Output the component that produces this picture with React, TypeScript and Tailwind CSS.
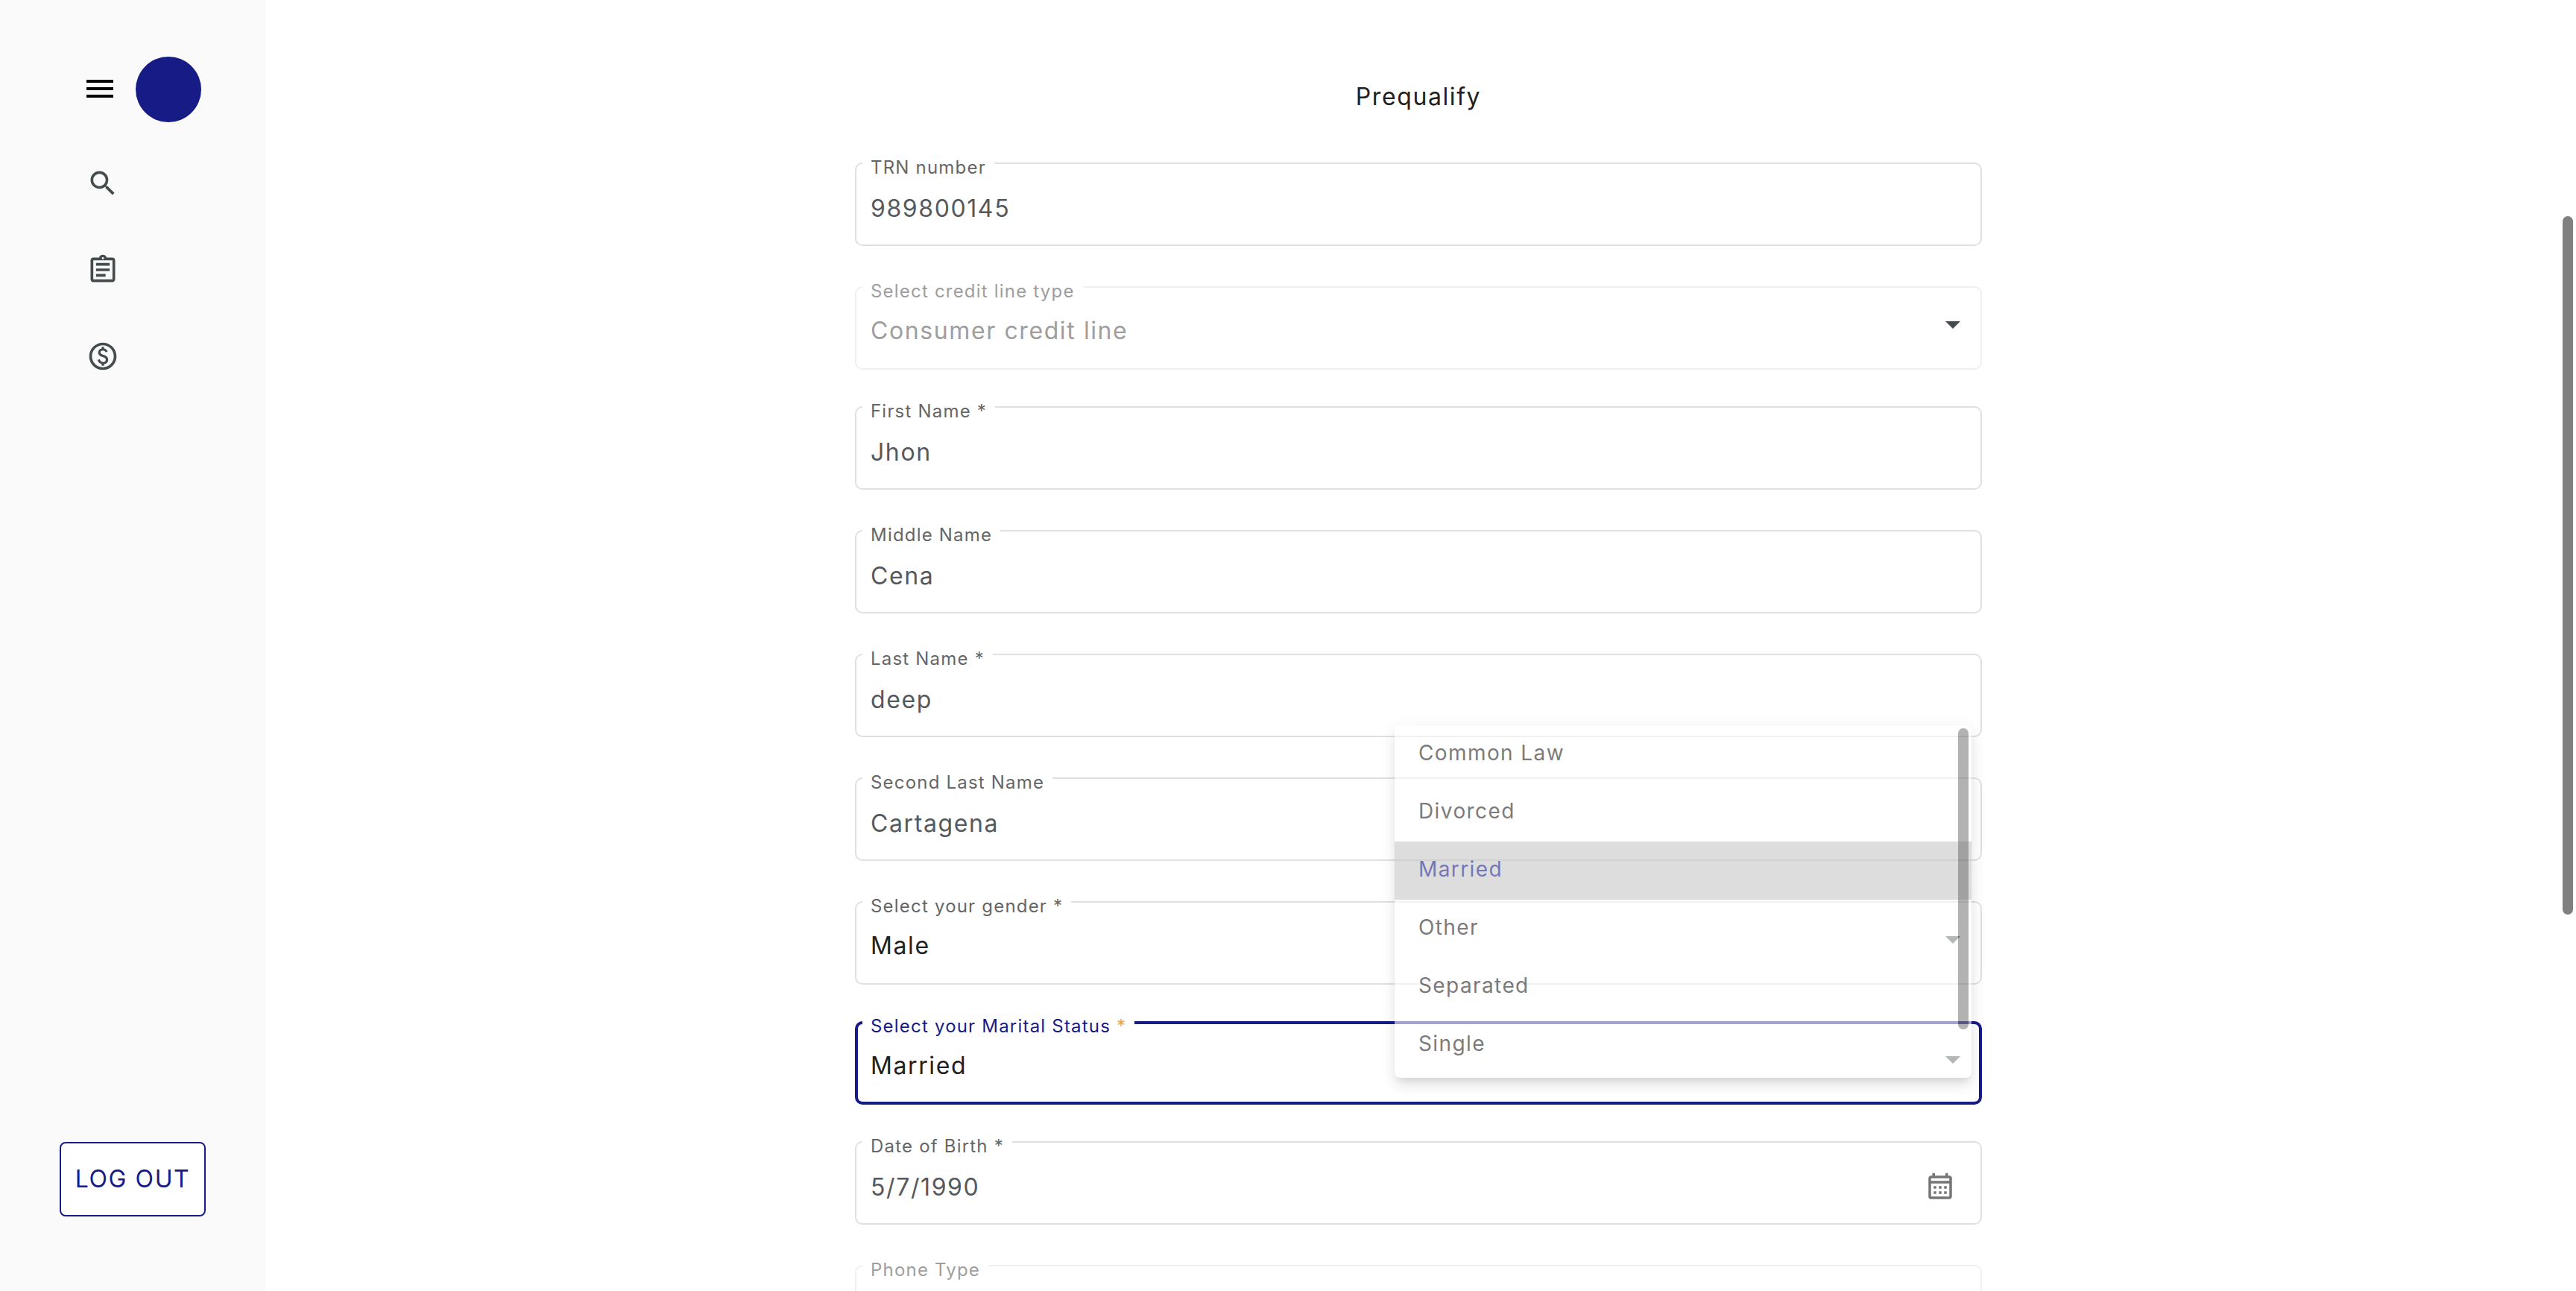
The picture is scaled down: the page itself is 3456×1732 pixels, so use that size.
import { useState, type ReactNode } from "react";
import { MdMenu, MdOutlineAssignment, MdOutlinePaid, MdSearch } from "react-icons/md";

type Tone = "normal" | "disabled" | "focused";

const edgeTone: Record<Tone, string> = {
  normal: "border-[#e0e0e0]",
  disabled: "border-[#f0f0f0]",
  focused: "border-[#171b86]",
};

const leadEdge: Record<Tone, string> = {
  normal: "border-y-2 border-l-2",
  disabled: "border-y-2 border-l-2",
  focused: "border-y-4 border-l-4",
};

const notchEdge: Record<Tone, string> = {
  normal: "border-b-2",
  disabled: "border-b-2",
  focused: "border-b-4",
};

const trailEdge: Record<Tone, string> = {
  normal: "border-y-2 border-r-2",
  disabled: "border-y-2 border-r-2",
  focused: "border-y-4 border-r-4",
};

const labelTone: Record<Tone, string> = {
  normal: "text-[#666666]",
  disabled: "text-[#9e9e9e]",
  focused: "text-[#171b86]",
};

type FrameProps = {
  id: string;
  label: string;
  required?: boolean;
  tone?: Tone;
  children: ReactNode;
};

/* Outlined form field: the outline and the control share one grid cell. */
function Frame({ id, label, required, tone = "normal", children }: FrameProps) {
  return (
    <div className="relative grid h-28 grid-cols-1 grid-rows-1">
      <div className="col-start-1 row-start-1 flex">
        <div className={`w-2.5 rounded-l-[10px] ${leadEdge[tone]} ${edgeTone[tone]}`} />
        <div className={`px-[11px] ${notchEdge[tone]} ${edgeTone[tone]}`}>
          <label
            htmlFor={id}
            className={`block text-2xl leading-[13px] tracking-wider whitespace-nowrap ${labelTone[tone]}`}
          >
            {label}
            {required && (
              <span className={tone === "focused" ? "text-[#f0a732]" : ""}> *</span>
            )}
          </label>
        </div>
        <div className={`flex-1 rounded-r-[10px] ${trailEdge[tone]} ${edgeTone[tone]}`} />
      </div>
      {children}
    </div>
  );
}

type FieldProps = {
  id: string;
  label: string;
  value: string;
  required?: boolean;
};

function TextField({ id, label, value, required, children }: FieldProps & { children?: ReactNode }) {
  const [text, setText] = useState(value);
  return (
    <Frame id={id} label={label} required={required}>
      <input
        id={id}
        type="text"
        value={text}
        onChange={(e) => setText(e.target.value)}
        className="col-start-1 row-start-1 w-full bg-transparent px-[21px] pt-3 text-[32px] tracking-wider text-[#54595d] outline-none"
      />
      {children}
    </Frame>
  );
}

type SelectFieldProps = FieldProps & {
  options: string[];
  tone?: Tone;
  children?: ReactNode;
};

function SelectField({ id, label, value, required, options, tone = "normal", children }: SelectFieldProps) {
  const [picked, setPicked] = useState(value);
  return (
    <Frame id={id} label={label} required={required} tone={tone}>
      <select
        id={id}
        value={picked}
        disabled={tone === "disabled"}
        onChange={(e) => setPicked(e.target.value)}
        className="col-start-1 row-start-1 w-full appearance-none bg-transparent px-[21px] pt-2 text-[32px] tracking-wider text-[#212121] opacity-100 outline-none disabled:text-[#9e9e9e]"
      >
        {options.map((o) => (
          <option key={o}>{o}</option>
        ))}
      </select>
      <svg
        viewBox="0 0 20 10"
        className="pointer-events-none col-start-1 row-start-1 mt-[47px] mr-[29px] h-2.5 w-5 self-start justify-self-end fill-[#454c4d]"
        aria-hidden="true"
      >
        <path d="M0 0h20L10 10z" />
      </svg>
      {children}
    </Frame>
  );
}

const statuses = ["Common Law", "Divorced", "Married", "Other", "Separated", "Single"];

function StatusMenu() {
  return (
    <div className="absolute right-3.5 bottom-9 z-10 h-[473px] w-[774px] rounded-lg bg-white opacity-60 shadow-[0_8px_10px_-6px_rgba(0,0,0,0.2),0_12px_16px_0_rgba(0,0,0,0.1),0_4px_20px_2px_rgba(0,0,0,0.08)]">
      <ul role="listbox" aria-label="Marital status options">
        {statuses.map((s) => (
          <li
            key={s}
            role="option"
            aria-selected={s === "Married"}
            className="flex h-[78px] items-center px-8 pb-1 text-[28px] tracking-wider text-[#252525] aria-selected:bg-[#c8c8c8] aria-selected:text-[#171b86]"
          >
            {s}
          </li>
        ))}
      </ul>
      <div className="absolute top-1 right-1 h-[404px] w-3.5 rounded-full bg-black/50" />
    </div>
  );
}

function CalendarIcon() {
  return (
    <svg viewBox="0 0 24 24" className="size-[42px] fill-[#757575]" aria-hidden="true">
      <path d="M7 11h2v2H7v-2m14-6v14c0 1.11-.89 2-2 2H5a2 2 0 0 1-2-2V5c0-1.1.9-2 2-2h1V1h2v2h8V1h2v2h1a2 2 0 0 1 2 2M5 7h14V5H5v2m14 12V9H5v10h14m-4-6v-2h2v2h-2m-4 0v-2h2v2h-2m-4 2h2v2H7v-2m8 2v-2h2v2h-2m-4 0v-2h2v2h-2Z" />
    </svg>
  );
}

function Sidebar() {
  return (
    <aside className="flex w-[356px] shrink-0 flex-col justify-between bg-[#fafafa] pt-[76px] pb-[100px]">
      <div>
        <div className="flex items-center gap-6 pl-[110px]">
          <button type="button" aria-label="Menu" className="pb-0.5 text-black">
            <MdMenu className="size-12" />
          </button>
          <div className="size-[88px] rounded-full bg-[#171b86]" />
        </div>
        <nav className="mt-[60px] flex flex-col items-start gap-[72px] pl-[116px] text-[#454c4d]">
          <a href="#search" aria-label="Search">
            <MdSearch className="size-11" />
          </a>
          <a href="#applications" aria-label="Applications">
            <MdOutlineAssignment className="size-11" />
          </a>
          <a href="#payments" aria-label="Payments">
            <MdOutlinePaid className="size-11" />
          </a>
        </nav>
      </div>
      <button
        type="button"
        className="h-[100px] self-center rounded-lg border-2 border-[#171b86] bg-white px-[19px] text-[32px] tracking-wider text-[#171b86]"
      >
        LOG OUT
      </button>
    </aside>
  );
}

export default function App() {
  return (
    <div className="flex h-screen overflow-hidden bg-white font-['Inter',sans-serif]">
      <Sidebar />
      <main className="min-w-0 flex-1 overflow-hidden pt-[110px] pr-1.5">
        <form className="mx-auto flex w-full max-w-[1512px] flex-col">
          <h1 className="text-center text-[32px] leading-10 tracking-wider text-[#212121]">Prequalify</h1>
          <div className="mt-[68px] flex flex-col gap-[54px]">
            <TextField id="trn" label="TRN number" value="989800145" />
            <div className="flex flex-col gap-[49px]">
              <SelectField
                id="credit"
                label="Select credit line type"
                value="Consumer credit line"
                options={["Consumer credit line"]}
                tone="disabled"
              />
              <TextField id="first" label="First Name" required value="Jhon" />
            </div>
            <TextField id="middle" label="Middle Name" value="Cena" />
            <TextField id="last" label="Last Name" required value="deep" />
            <TextField id="second-last" label="Second Last Name" value="Cartagena" />
            <div className="flex flex-col gap-[49px]">
              <SelectField
                id="gender"
                label="Select your gender"
                required
                value="Male"
                options={["Male", "Female"]}
              />
              <SelectField
                id="marital"
                label="Select your Marital Status"
                required
                value="Married"
                options={statuses}
                tone="focused"
              >
                <StatusMenu />
              </SelectField>
              <TextField id="birth" label="Date of Birth" required value="5/7/1990">
                <button
                  type="button"
                  aria-label="Open calendar"
                  className="col-start-1 row-start-1 mt-[41px] mr-[35px] self-start justify-self-end"
                >
                  <CalendarIcon />
                </button>
              </TextField>
            </div>
            <SelectField id="phone" label="Phone Type" value="Mobile" options={["Mobile"]} tone="disabled" />
          </div>
        </form>
      </main>
      <div className="fixed top-[290px] right-1 h-[937px] w-3.5 rounded-full bg-[#808080]" />
    </div>
  );
}
